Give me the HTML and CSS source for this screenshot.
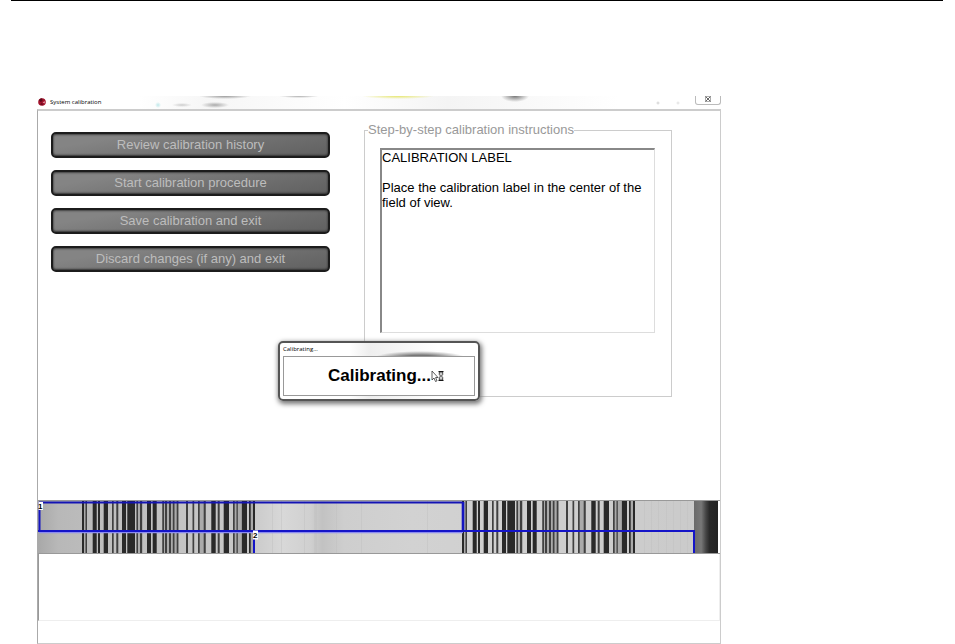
FILE: index.html
```html
<!DOCTYPE html>
<html lang="en">
<head>
    <meta charset="UTF-8">
    <meta name="viewport" content="width=device-width, initial-scale=1.0">
    <title>System calibration</title>
    <link rel="stylesheet" href="styles.css">
</head>
<body>
    <hr class="page-rule">
    <main class="window">
        <header class="titlebar">
            <svg class="app-icon" viewBox="0 0 8 8" aria-hidden="true">
                <circle cx="4" cy="4" r="3.8" fill="#a3122c"/>
                <path d="M1 2.2A3.8 3.8 0 0 1 4 .3L4.6 3 2.6 4z" fill="#5d0a1b"/>
                <path d="M4.6 4.2L7 3.2 6.6 5.6z" fill="#e9a9b2"/>
                <path d="M2 6.6L4 4.6l1 2.6z" fill="#6b0d20"/>
            </svg>
            <h1 class="window-title">System calibration</h1>
            <button class="close" type="button" aria-label="Close">
                <svg viewBox="0 0 8 6" aria-hidden="true">
                    <path d="M1.500 .5h5v5h-5z" fill="#fff" stroke="#888" stroke-width=".7"/>
                    <path d="M1.500 .5l5 5M6.500 .5l-5 5" stroke="#666" stroke-width="1"/>
                </svg>
            </button>
        </header>

        <div class="client">
            <div class="top">
                <nav class="actions">
                    <button type="button" disabled>Review calibration history</button>
                    <button type="button" disabled>Start calibration procedure</button>
                    <button type="button" disabled>Save calibration and exit</button>
                    <button type="button" disabled>Discard changes (if any) and exit</button>
                </nav>

                <fieldset class="steps">
                    <legend><label for="instructions">Step-by-step calibration instructions</label></legend>
                    <textarea id="instructions" readonly>CALIBRATION LABEL

Place the calibration label in the center of the field of view.</textarea>
                </fieldset>

                <section class="dialog" role="dialog" aria-labelledby="dialog-title">
                    <h2 id="dialog-title">Calibrating...</h2>
                    <div class="dialog-body">
                        <p>Calibrating...</p>
                        <!-- busy cursor -->
                        <svg class="cursor" viewBox="0 0 13 13" aria-hidden="true">
                            <path d="M1 1v9l2-2 1.500 3.500 1.500-.7L4.600 7.500H7z" fill="#fff" stroke="#333" stroke-width=".8"/>
                            <path d="M7.500 1.500h5M7.500 10.500h5" stroke="#111" stroke-width="1.200"/>
                            <path d="M8.300 2v2.500L9.500 6 8.300 7.500V10h3.400V7.500L10.500 6l1.200-1.500V2z" fill="#ccc" stroke="#222" stroke-width=".8"/>
                        </svg>
                    </div>
                </section>
            </div>

            <!-- scan line image with the two overlapping fields of view -->
            <svg class="scan" viewBox="0 0 682 52" role="img" aria-label="Scanned calibration label">
                <defs>
                    <linearGradient id="paper">
                        <stop offset="0" stop-color="#a8a8a8"/>
                        <stop offset=".03" stop-color="#b8b8b8"/>
                        <stop offset=".12" stop-color="#c0c0c0"/>
                        <stop offset=".31" stop-color="#c8c8c8"/>
                        <stop offset=".36" stop-color="#d8d8d8"/>
                        <stop offset=".4" stop-color="#d0d0d0"/>
                        <stop offset=".418" stop-color="#c2c2c2"/>
                        <stop offset=".45" stop-color="#cecece"/>
                        <stop offset=".55" stop-color="#d2d2d2"/>
                        <stop offset="1" stop-color="#cacaca"/>
                    </linearGradient>
                    <linearGradient id="edge">
                        <stop offset="0" stop-color="#6a6a6a"/>
                        <stop offset=".3" stop-color="#777"/>
                        <stop offset=".5" stop-color="#444"/>
                        <stop offset=".65" stop-color="#282828"/>
                        <stop offset="1" stop-color="#222"/>
                    </linearGradient>
                    <g id="bars">
                        <path fill="#aaa" d="M46 0h3v52h-3zM98 0h7v52h-7zM124 0h17v52h-17zM160 0h8v52h-8zM195 0h8v52h-8zM211 0h6v52h-6z"/>
                        <path fill="#292929" d="M44 0h2v52h-2zM54.700 0h4v52h-4zM60 0h2v52h-2zM65.700 0h4.300v52h-4.300zM84 0h4v52h-4zM89.300 0h7.700v52h-7.700zM109 0h4v52h-4zM114.700 0h4v52h-4zM173.300 0h4.400v52h-4.400zM185.700 0h5.300v52h-5.300zM203.700 0h5.300v52h-5.300zM211 0h1.700v52H211zM215 0h2v52h-2z"/>
                        <path fill="#404040" d="M47.500 0h1.500v52h-1.500zM74 0h1.700v52H74zM78.300 0h2v52h-2zM98.500 0h1.500v52h-1.500zM102 0h2v52h-2zM124.300 0h1.700v52h-1.700zM127 0h2v52h-2zM131 0h2v52h-2zM134.800 0h1.700v52h-1.700zM138.700 0h1.600v52h-1.600zM148 0h2v52h-2zM154.500 0h1.700v52h-1.700zM160 0h1.700v52H160zM165.700 0h2v52h-2zM179.700 0h2v52h-2zM195 0h1.700v52H195zM198.500 0h1.300v52h-1.300z"/>
                    </g>
                </defs>
                <rect width="682" height="52" fill="#fff"/>
                <rect width="680" height="52" fill="url(#paper)"/>
                <path fill="#bdbdbd" opacity=".4" d="M234 0h1v52h-1zM243 0h1v52h-1zM266 0h1v52h-1zM276 0h3v52h-3zM298 0h1v52h-1zM323 0h1v52h-1zM389 0h1v52h-1zM606 0h1v52h-1zM613 0h1v52h-1zM620 0h1v52h-1zM628 0h1v52h-1zM635 0h1v52h-1zM642 0h1v52h-1zM649 0h1v52h-1z"/>
                <use href="#bars"/>
                <use href="#bars" x="380"/>
                <rect x="656" width="24" height="52" fill="url(#edge)"/>
                <path d="M1 31.500h424" stroke="#8c8cf0" stroke-width="1.500"/>
                <path d="M1 1.500H425" stroke="#1414b4" stroke-width="2"/>
                <path d="M1.500 1v29" stroke="#1414c0" stroke-width="2"/>
                <path d="M0 30H656V52M216 30v22" fill="none" stroke="#1414c8" stroke-width="2"/>
                <path d="M425 1v29" stroke="#1414c0" stroke-width="2.600"/>
                <path d="M.5 1H5v8H.500zM215 29.500h5v9h-5z" fill="#fff"/>
                <text class="tag" x="0" y="8">1</text>
                <text class="tag" x="215" y="37">2</text>
            </svg>

            <div class="log"></div>
        </div>
    </main>
</body>
</html>
```
FILE: styles.css
```css
body {
    margin: 0;
    padding: 0 12px 0 11px;
    background: #fff;
    font-family: "Liberation Sans", Arial, sans-serif;
    color: #000;
}

.page-rule {
    height: 1px;
    margin: 0 0 95px;
    border: 0;
    background: #000;
}

.window {
    max-width: 684px;
    margin-left: 26px;
}

/* title bar, glass with what lies behind showing through */
.titlebar {
    display: flex;
    align-items: flex-start;
    height: 13px;
    background:
        radial-gradient(ellipse 14px 6px at 478px 0, #777, transparent),
        radial-gradient(ellipse 36px 3px at 361px 0, #e6e66e, transparent),
        radial-gradient(ellipse 26px 3px at 188px 0, #999, transparent),
        radial-gradient(ellipse 20px 2px at 262px 0, #aaa, transparent),
        radial-gradient(ellipse 14px 3px at 178px 9px, #aaa, transparent),
        radial-gradient(ellipse 10px 2px at 145px 9px, #ccc, transparent),
        radial-gradient(circle 3px at 121px 9px, #bfe8ea, transparent),
        radial-gradient(circle 2px at 621px 7px, #ccc, transparent),
        radial-gradient(circle 2px at 641px 7px, #ddd, transparent),
        linear-gradient(90deg, #fff 15%, #f6f6f6 25%, #fff 45%, #f4f4f4 60%, #fff 85%);
}

.app-icon {
    width: 8px;
    height: 8px;
    margin: 2px 4px 0 1px;
}

.window-title {
    margin: 0;
    font: 6px/12px "Open Sans", "Noto Sans", sans-serif;
}

.close {
    display: flex;
    justify-content: center;
    width: 26px;
    height: 9px;
    margin-left: auto;
    padding: 0;
    border: 1px solid #bbb;
    border-top: 0;
    border-radius: 0 0 3px 3px;
    background: #fff;
}

.close svg {
    width: 8px;
    height: 6px;
}

.client {
    border: 1px solid #ccc;
    border-top: 2px solid #ccc;
    border-left-color: #aaa;
    padding-bottom: 22px;
}

.top {
    position: relative;
    display: flex;
    align-items: flex-start;
    justify-content: space-between;
    gap: 32px;
    min-height: 389px;
    padding: 12px 48px 0 13px;
    box-sizing: border-box;
}

.actions {
    display: flex;
    flex: 1;
    flex-direction: column;
    gap: 12px;
    max-width: 279px;
    padding-top: 9px;
}

.actions button {
    height: 26px;
    padding: 0;
    border: 2px solid #1c1c1c;
    border-radius: 5px;
    background: linear-gradient(170deg, #848484 20%, #707070 60%, #606060);
    box-shadow: inset 0 -1px 2px #333, inset 0 1px 2px #444;
    color: #bdbdbd;
    font: 13px/20px "Liberation Sans", Arial, sans-serif;
}

.steps {
    flex: 1;
    min-width: 0;
    max-width: 308px;
    height: 274px;
    margin: 0;
    padding: 11px 16px 0 15px;
    border: 1px solid #ccc;
    box-sizing: border-box;
}

.steps legend {
    margin-left: -12px;
    padding: 0;
    color: #999;
    font-size: 13px;
    line-height: 14px;
}

.steps textarea {
    display: block;
    width: 100%;
    height: 185px;
    padding: 0;
    border: 1px solid #ddd;
    border-top: 2px solid #888;
    border-left: 2px solid #888;
    box-sizing: border-box;
    resize: none;
    outline: 0;
    background: #fff;
    color: #000;
    font: 13px/15px "Liberation Sans", Arial, sans-serif;
}

.dialog {
    position: absolute;
    top: 230px;
    left: 50%;
    width: 202px;
    height: 60px;
    padding: 0 3px;
    border: 2px solid #555;
    border-radius: 5px;
    box-sizing: border-box;
    transform: translateX(-50%);
    background:
        radial-gradient(ellipse 46px 7px at 140px 15px, #777 40%, transparent),
        linear-gradient(90deg, #fff 35%, #eee 45%, #fff 80%);
    box-shadow: 1px 2px 5px 1px #777;
}

.dialog h2 {
    margin: 0;
    font: 6px/13px "Open Sans", "Noto Sans", sans-serif;
}

.dialog-body {
    display: flex;
    align-items: center;
    justify-content: center;
    height: 38px;
    padding-left: 14px;
    border: 1px solid #999;
    background: #fff;
}

.dialog-body p {
    margin: 0;
    font-size: 17px;
    font-weight: bold;
    line-height: 20px;
}

.cursor {
    width: 13px;
    height: 13px;
}

.scan {
    display: block;
    width: 100%;
    border: solid #999;
    border-width: 1px 0;
    box-sizing: border-box;
}

.tag {
    font: bold 8px "Liberation Sans", Arial, sans-serif;
}

.log {
    height: 67px;
    border: 1px solid #eee;
    border-top: 0;
    border-left-color: #999;
    box-sizing: border-box;
}
```
